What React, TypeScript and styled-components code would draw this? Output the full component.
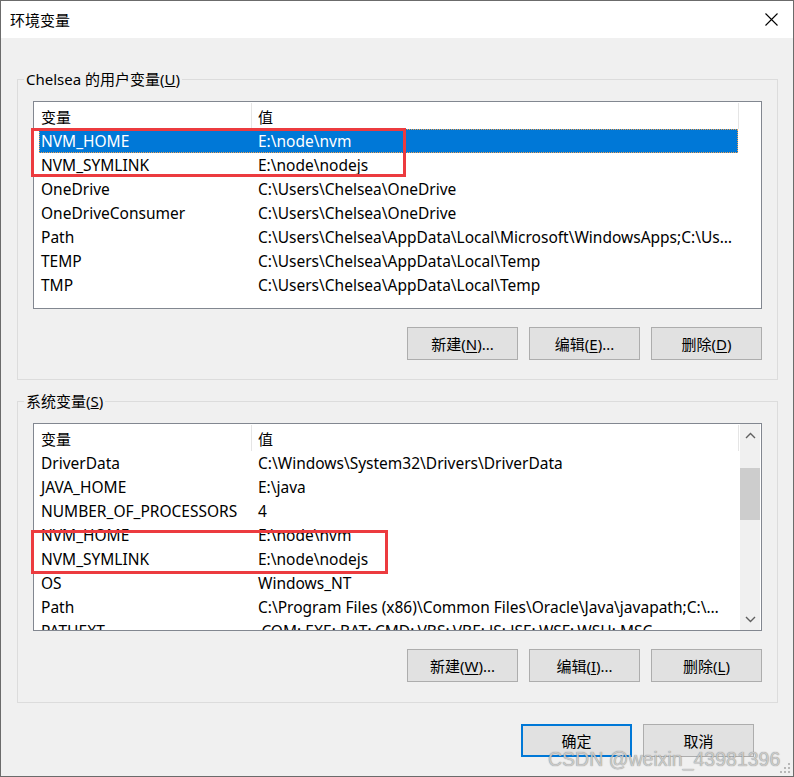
import { FC } from 'react';
import styled, { createGlobalStyle } from 'styled-components';

const GlobalStyle = createGlobalStyle`
  html, body {
    margin: 0;
    padding: 0;
  }

  body {
    background: #3a3a3a;
    font-family: 'Segoe UI', 'Noto Sans', 'Noto Sans CJK SC', sans-serif;
  }
`;

const Window = styled.div`
  position: relative;
  width: 794px;
  height: 777px;
  box-sizing: border-box;
  border: 1px solid #6b6b6b;
  background: #f0f0f0;
  display: flex;
  flex-flow: column nowrap;
  font-size: 15px;
  color: #000;
  overflow: hidden;
`;

const TitleBar = styled.div`
  height: 37px;
  flex: none;
  background: #fff;
  display: flex;
  align-items: center;
  justify-content: space-between;
  padding: 0 15px 0 9px;
`;

const Title = styled.span`
  font-family: 'Noto Sans CJK SC', sans-serif;
  font-size: 15px;
`;

const Body = styled.div`
  padding: 41px 15px 0 16px;
  display: flex;
  flex-flow: column nowrap;
`;

const GroupBox = styled.section<{ $gap?: number; $bottom: number }>`
  border: 1px solid #dcdcdc;
  padding: 0 15px ${(p) => p.$bottom}px;
  margin-top: ${(p) => p.$gap ?? 0}px;
  display: flex;
  flex-flow: column nowrap;
`;

const GroupTitle = styled.div`
  margin: -11px 0 0 -9px;
  padding: 0 2px;
  width: fit-content;
  line-height: 20px;
  height: 20px;
  background: #f0f0f0;
  white-space: nowrap;
`;

const ListWrap = styled.div`
  position: relative;
  margin-top: 12px;
  height: 208px;
`;

const List = styled.div`
  height: 208px;
  box-sizing: border-box;
  border: 1px solid #828790;
  background: #fff;
  display: flex;
  flex-flow: row nowrap;
  overflow: hidden;
`;

const ListContent = styled.div`
  flex: 1;
  min-width: 0;
  display: flex;
  flex-flow: column nowrap;
`;

const HeaderRow = styled.div`
  height: 27px;
  flex: none;
  display: grid;
  grid-template-columns: 217px 488px;
`;

const HeaderCell = styled.div<{ $divider?: boolean }>`
  display: flex;
  align-items: center;
  padding-left: ${(p) => (p.$divider ? 6 : 7)}px;
  margin: 1px 0 0;
  border-left: ${(p) => (p.$divider ? '1px solid #e5e5e5' : 'none')};
  border-right: ${(p) => (p.$divider ? '1px solid #e5e5e5' : 'none')};
  font-family: 'Noto Sans CJK SC', sans-serif;
`;

const Row = styled.div<{ $selected?: boolean }>`
  height: 24px;
  flex: none;
  box-sizing: border-box;
  margin-left: 5px;
  width: 699px;
  display: grid;
  grid-template-columns: 212px 487px;
  align-items: center;
  background: ${(p) => (p.$selected ? '#0078d7' : 'transparent')};
  color: ${(p) => (p.$selected ? '#fff' : '#000')};
  outline: ${(p) => (p.$selected ? '1px dotted #f0a050' : 'none')};
  outline-offset: -1px;
  font-size: 15.5px;
  white-space: nowrap;
`;

const Cell = styled.div<{ $value?: boolean }>`
  padding-left: ${(p) => (p.$value ? 7 : 2)}px;
  overflow: hidden;
  text-overflow: ellipsis;
  padding-right: 6px;
`;

const ScrollBar = styled.div`
  width: 20px;
  margin-right: 1px;
  flex: none;
  background: #f0f0f0;
  display: flex;
  flex-flow: column nowrap;
`;

const ScrollArrow = styled.div`
  height: 22px;
  flex: none;
  display: flex;
  align-items: center;
  justify-content: center;
`;

const ScrollTrack = styled.div`
  flex: 1;
`;

const Thumb = styled.div`
  margin-top: 22px;
  height: 52px;
  background: #cdcdcd;
`;

const Annotation = styled.div<{ $left: number; $top: number; $w: number; $h: number }>`
  position: absolute;
  left: ${(p) => p.$left}px;
  top: ${(p) => p.$top}px;
  width: ${(p) => p.$w}px;
  height: ${(p) => p.$h}px;
  box-sizing: border-box;
  border: 3px solid #ec3b3f;
  pointer-events: none;
`;

const ButtonRow = styled.div<{ $pad?: number; $top: number }>`
  display: flex;
  flex-flow: row nowrap;
  justify-content: flex-end;
  gap: 11px;
  margin-top: ${(p) => p.$top}px;
  padding-right: ${(p) => p.$pad ?? 0}px;
`;

const Button = styled.button<{ $default?: boolean }>`
  all: unset;
  width: 111px;
  height: 33px;
  box-sizing: border-box;
  display: flex;
  align-items: center;
  justify-content: center;
  background: #e1e1e1;
  border: ${(p) => (p.$default ? '2px solid #0078d7' : '1px solid #adadad')};
  font-family: 'Segoe UI', 'Noto Sans', 'Noto Sans CJK SC', sans-serif;
  font-size: 15px;
  color: #000;
  white-space: nowrap;

  u {
    text-underline-offset: 2px;
  }
`;

const Watermark = styled.div`
  position: absolute;
  left: 547px;
  top: 747px;
  font-family: 'Liberation Sans', Arial, sans-serif;
  font-size: 19.5px;
  line-height: 22px;
  color: rgba(215, 215, 215, 0.85);
  text-shadow: 0 0 1px rgba(70, 70, 70, 0.75);
  pointer-events: none;
  white-space: nowrap;
`;

const Grip = styled.svg`
  position: absolute;
  right: 2px;
  bottom: 2px;
`;

type EnvVar = { name: string; value: string };

const userVars: EnvVar[] = [
  { name: 'NVM_HOME', value: 'E:\\node\\nvm' },
  { name: 'NVM_SYMLINK', value: 'E:\\node\\nodejs' },
  { name: 'OneDrive', value: 'C:\\Users\\Chelsea\\OneDrive' },
  { name: 'OneDriveConsumer', value: 'C:\\Users\\Chelsea\\OneDrive' },
  {
    name: 'Path',
    value: 'C:\\Users\\Chelsea\\AppData\\Local\\Microsoft\\WindowsApps;C:\\Users\\Chelsea\\AppData',
  },
  { name: 'TEMP', value: 'C:\\Users\\Chelsea\\AppData\\Local\\Temp' },
  { name: 'TMP', value: 'C:\\Users\\Chelsea\\AppData\\Local\\Temp' },
];

const systemVars: EnvVar[] = [
  { name: 'DriverData', value: 'C:\\Windows\\System32\\Drivers\\DriverData' },
  { name: 'JAVA_HOME', value: 'E:\\java' },
  { name: 'NUMBER_OF_PROCESSORS', value: '4' },
  { name: 'NVM_HOME', value: 'E:\\node\\nvm' },
  { name: 'NVM_SYMLINK', value: 'E:\\node\\nodejs' },
  { name: 'OS', value: 'Windows_NT' },
  {
    name: 'Path',
    value: 'C:\\Program Files (x86)\\Common Files\\Oracle\\Java\\javapath;C:\\Windows\\system32',
  },
  { name: 'PATHEXT', value: '.COM;.EXE;.BAT;.CMD;.VBS;.VBE;.JS;.JSE;.WSF;.WSH;.MSC' },
];

const Chevron: FC<{ up?: boolean }> = ({ up }) => (
  <svg width="11" height="7" viewBox="0 0 11 7">
    <path
      d={up ? 'M1 6 L5.5 1.5 L10 6' : 'M1 1 L5.5 5.5 L10 1'}
      fill="none"
      stroke="#606060"
      strokeWidth="1.4"
    />
  </svg>
);

const VarList: FC<{ vars: EnvVar[]; selected?: number; scroll?: boolean }> = ({
  vars,
  selected,
  scroll,
}) => (
  <List>
    <ListContent>
      <HeaderRow>
        <HeaderCell>变量</HeaderCell>
        <HeaderCell $divider>值</HeaderCell>
      </HeaderRow>
      {vars.map((v, i) => (
        <Row key={v.name} $selected={i === selected}>
          <Cell>{v.name}</Cell>
          <Cell $value>{v.value}</Cell>
        </Row>
      ))}
    </ListContent>
    {scroll && (
      <ScrollBar>
        <ScrollArrow>
          <Chevron up />
        </ScrollArrow>
        <ScrollTrack>
          <Thumb />
        </ScrollTrack>
        <ScrollArrow>
          <Chevron />
        </ScrollArrow>
      </ScrollBar>
    )}
  </List>
);

const App: FC = () => (
  <>
    <GlobalStyle />
    <Window>
      <TitleBar>
        <Title>环境变量</Title>
        <svg width="13" height="13" viewBox="0 0 13 13">
          <path d="M0.5 0.5 L12.5 12.5 M12.5 0.5 L0.5 12.5" stroke="#000" strokeWidth="1.1" />
        </svg>
      </TitleBar>
      <Body>
        <GroupBox $bottom={19}>
          <GroupTitle>
            Chelsea 的用户变量(<u>U</u>)
          </GroupTitle>
          <ListWrap>
            <VarList vars={userVars} selected={0} />
            <Annotation $left={-2} $top={27} $w={375} $h={49} />
          </ListWrap>
          <ButtonRow $top={18}>
            <Button>
              新建(<u>N</u>)...
            </Button>
            <Button>
              编辑(<u>E</u>)...
            </Button>
            <Button>
              删除(<u>D</u>)
            </Button>
          </ButtonRow>
        </GroupBox>
        <GroupBox $gap={21} $bottom={20}>
          <GroupTitle>
            系统变量(<u>S</u>)
          </GroupTitle>
          <ListWrap>
            <VarList vars={systemVars} scroll />
            <Annotation $left={-2} $top={107} $w={357} $h={44} />
          </ListWrap>
          <ButtonRow $top={18}>
            <Button>
              新建(<u>W</u>)...
            </Button>
            <Button>
              编辑(<u>I</u>)...
            </Button>
            <Button>
              删除(<u>L</u>)
            </Button>
          </ButtonRow>
        </GroupBox>
        <ButtonRow $top={21} $pad={24}>
          <Button $default>确定</Button>
          <Button>取消</Button>
        </ButtonRow>
      </Body>
      <Watermark>CSDN @weixin_43981396</Watermark>
      <Grip width="12" height="12" viewBox="0 0 12 12">
        <g fill="#b8b8b8">
          <rect x="9" y="1" width="2" height="2" />
          <rect x="5" y="5" width="2" height="2" />
          <rect x="9" y="5" width="2" height="2" />
          <rect x="1" y="9" width="2" height="2" />
          <rect x="5" y="9" width="2" height="2" />
          <rect x="9" y="9" width="2" height="2" />
        </g>
      </Grip>
    </Window>
  </>
);

export default App;
